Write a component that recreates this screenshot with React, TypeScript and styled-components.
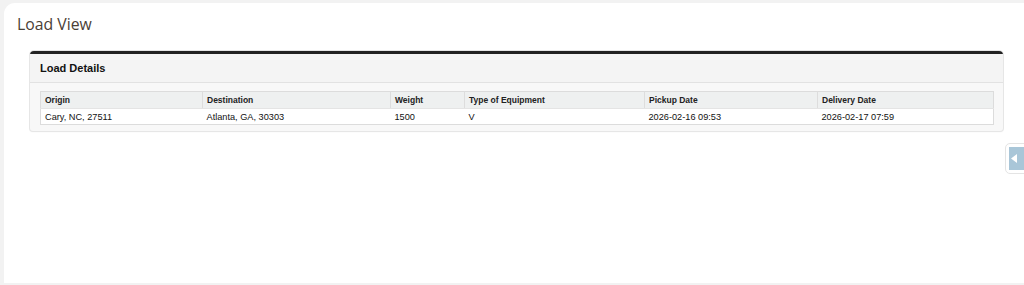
import styled, { createGlobalStyle } from 'styled-components';

const GlobalStyle = createGlobalStyle`
  html, body {
    margin: 0;
    padding: 0;
    background: #f2f2f2;
    overflow: hidden;
  }
`;

const columns = [
  { label: 'Origin', width: 162 },
  { label: 'Destination', width: 188 },
  { label: 'Weight', width: 74 },
  { label: 'Type of Equipment', width: 180 },
  { label: 'Pickup Date', width: 173 },
  { label: 'Delivery Date', width: 176 },
];

const rows = [
  ['Cary, NC, 27511', 'Atlanta, GA, 30303', '1500', 'V', '2026-02-16 09:53', '2026-02-17 07:59'],
];

function App() {
  return (
    <>
      <GlobalStyle />
      <Page>
        <Panel>
          <Title>Load View</Title>
          <Card>
            <CardHeader>Load Details</CardHeader>
            <CardBody>
              <Table>
                <colgroup>
                  {columns.map((c) => (
                    <col key={c.label} style={{ width: c.width }} />
                  ))}
                </colgroup>
                <thead>
                  <tr>
                    {columns.map((c) => (
                      <Th key={c.label}>{c.label}</Th>
                    ))}
                  </tr>
                </thead>
                <tbody>
                  {rows.map((r, i) => (
                    <tr key={i}>
                      {r.map((v, j) => (
                        <Td key={j}>{v}</Td>
                      ))}
                    </tr>
                  ))}
                </tbody>
              </Table>
            </CardBody>
          </Card>
          <SideTab>
            <SideTabInner>
              <svg width="6" height="9" viewBox="0 0 6 9">
                <path d="M6 0 L0 4.5 L6 9 Z" fill="#ffffff" />
              </svg>
            </SideTabInner>
          </SideTab>
        </Panel>
      </Page>
    </>
  );
}

const Page = styled.div`
  height: 285px;
  padding: 3px 0 0 4px;
  box-sizing: border-box;
`;

const Panel = styled.div`
  position: relative;
  height: 280px;
  margin-right: -20px;
  background: #ffffff;
  border-radius: 11px 0 0 0;
  padding: 11px 41px 0 26px;
  box-sizing: border-box;
`;

const Title = styled.h1`
  margin: 0 0 16px -13px;
  font-family: 'Open Sans', 'Noto Sans', sans-serif;
  font-size: 15.8px;
  font-weight: 400;
  line-height: 21px;
  color: #4a4036;
`;

const Card = styled.div`
  border-top: 3px solid #222222;
  border-radius: 4px 4px 3px 3px;
  background: #f8f8f8;
  box-shadow: 0 0 0 1px #e6e6e6, 0 1px 2px rgba(0, 0, 0, 0.06);
  font-family: 'Liberation Sans', Arial, sans-serif;
`;

const CardHeader = styled.div`
  height: 28px;
  padding: 0 10px;
  display: flex;
  align-items: center;
  background: #f4f4f4;
  border-bottom: 1px solid #e2e2e2;
  font-size: 11px;
  font-weight: 700;
  color: #111111;
`;

const CardBody = styled.div`
  padding: 8px 10px 6px;
`;

const Table = styled.table`
  width: 100%;
  border-collapse: collapse;
  table-layout: fixed;
  background: #ffffff;
  border: 1px solid #dcdcdc;
`;

const Th = styled.th`
  height: 16px;
  padding: 0 4px;
  text-align: left;
  font-size: 8.5px;
  font-weight: 700;
  color: #222222;
  background: #eef0f0;
  border-left: 1px solid #dddddd;
  border-bottom: 1px solid #e4e4e4;
`;

const Td = styled.td`
  height: 15px;
  padding: 0 4px;
  font-size: 9.2px;
  color: #111111;
  white-space: nowrap;
`;

const SideTab = styled.div`
  position: absolute;
  top: 140px;
  left: 1001px;
  width: 24px;
  height: 31px;
  padding: 3px;
  box-sizing: border-box;
  border: 1px solid #e4e4e4;
  border-radius: 5px;
  background: #ffffff;
`;

const SideTabInner = styled.div`
  height: 100%;
  background: #a9c6d8;
  display: flex;
  align-items: center;
  padding-left: 2px;
`;

export default App;
